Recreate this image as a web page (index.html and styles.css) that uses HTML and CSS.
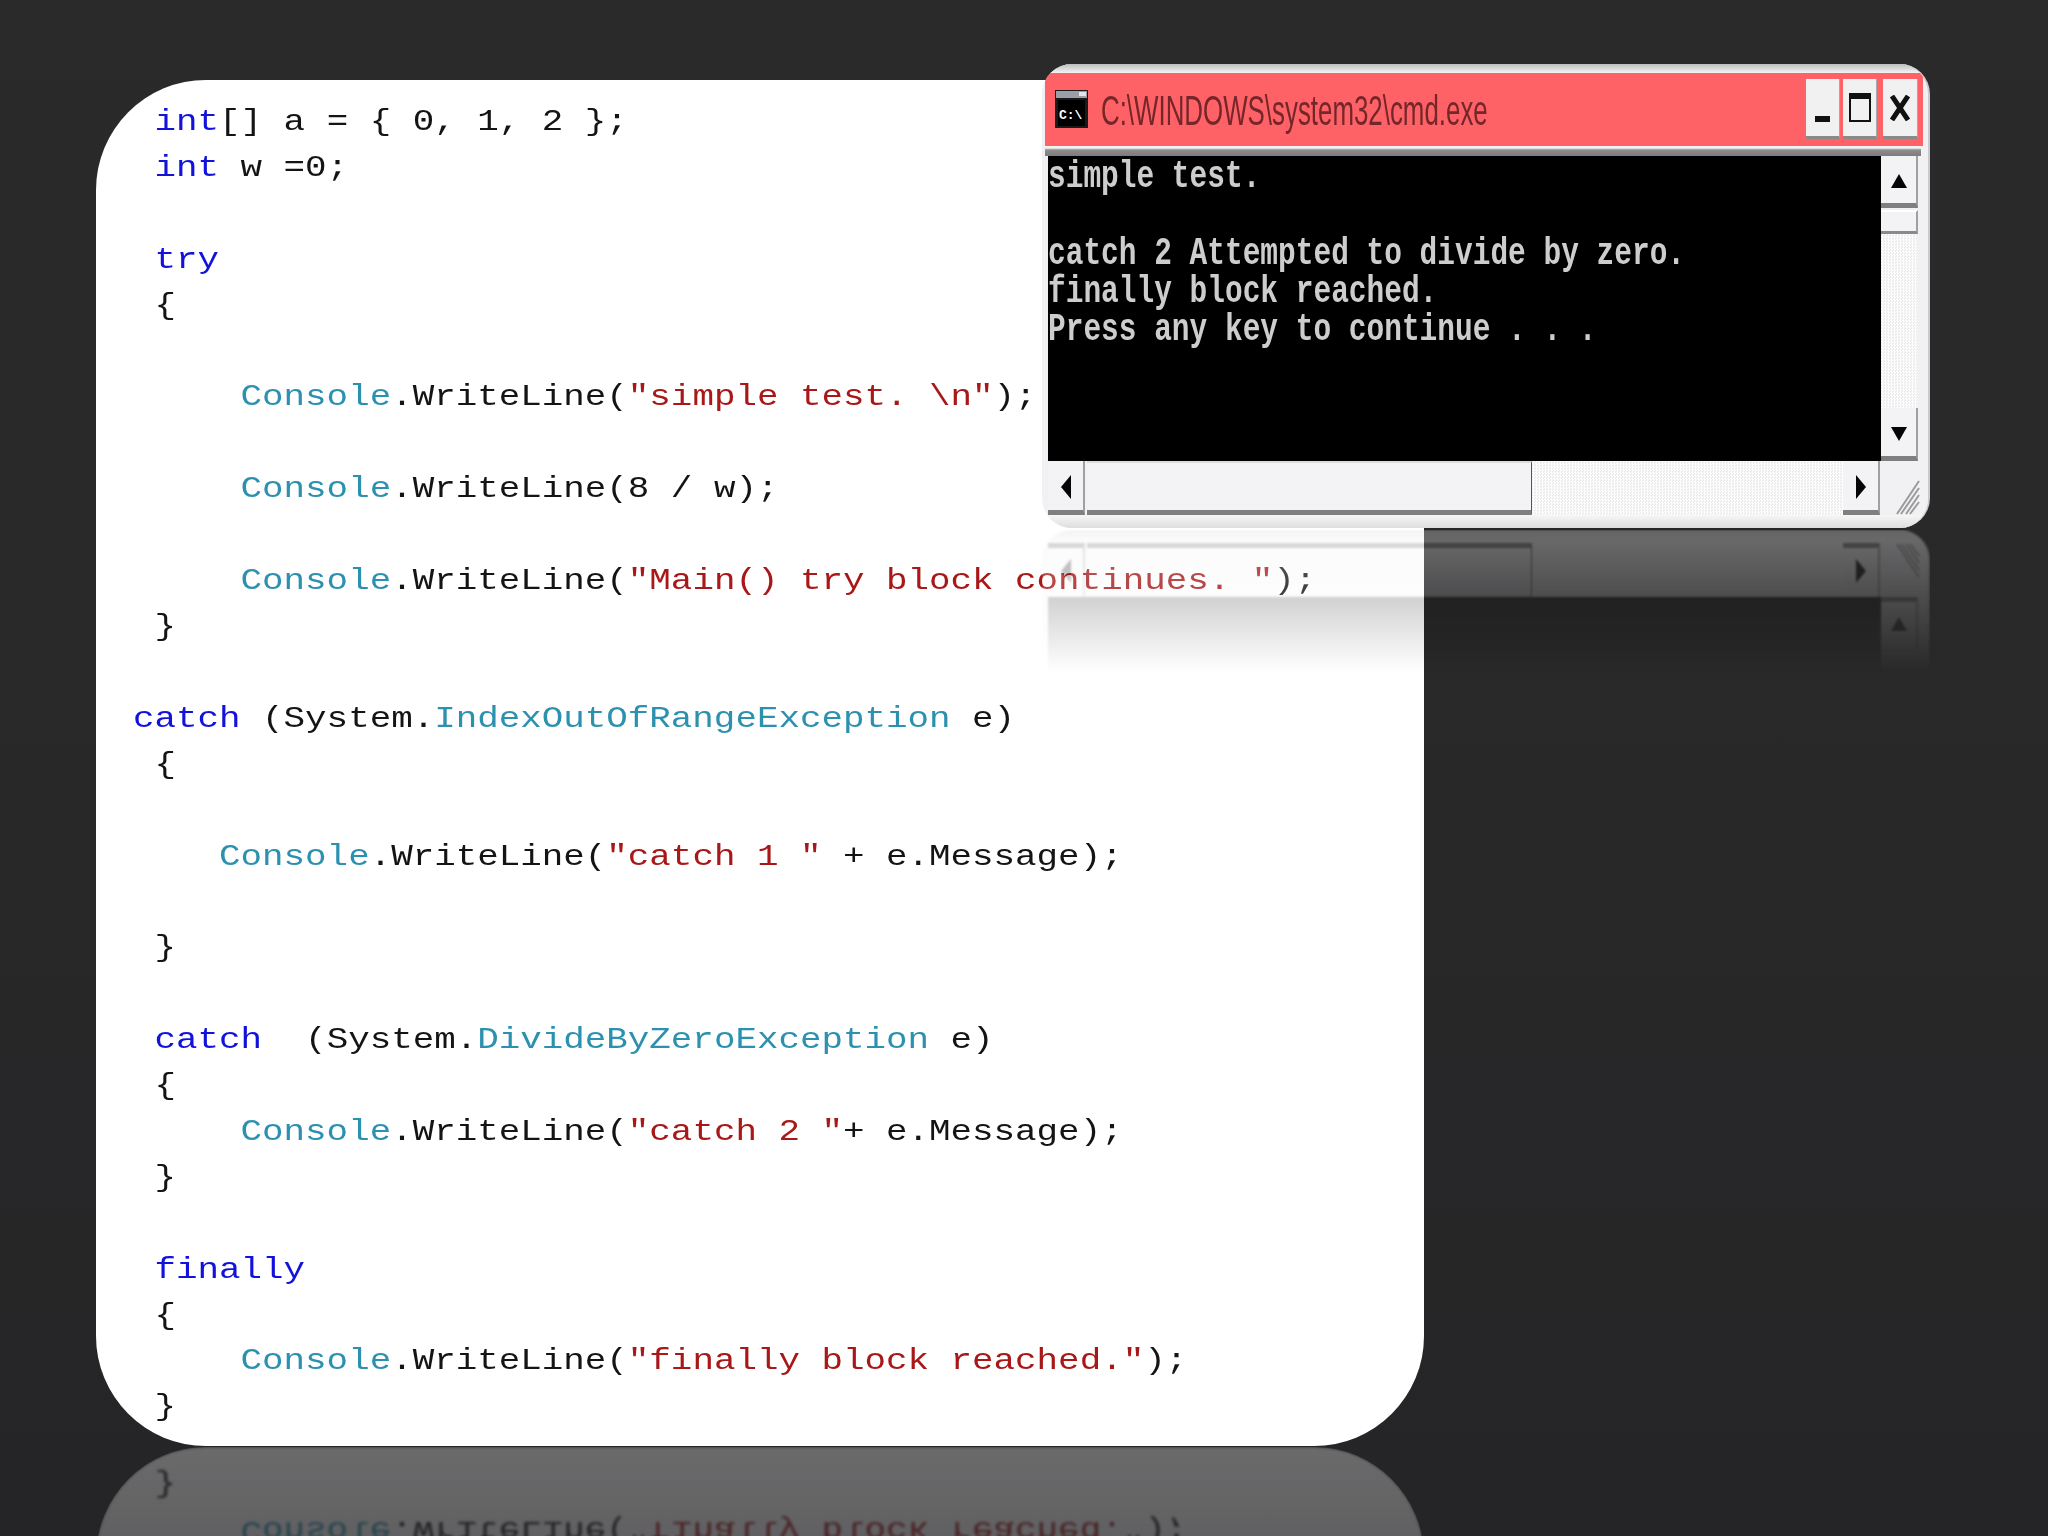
FILE: index.html
```html
<!DOCTYPE html>
<html lang="en">
<head>
<meta charset="utf-8">
<title>try catch finally</title>
<link rel="stylesheet" href="styles.css">
</head>
<body>
<main class="slide">
  <section class="panel">
    <div class="code">
      <div class="ln"><span class="k"> int</span><span>[] a = { 0, 1, 2 };</span></div>
      <div class="ln"><span class="k"> int</span><span> w =0;</span></div>
      <div class="ln"></div>
      <div class="ln"><span class="k"> try</span></div>
      <div class="ln"><span> {</span></div>
      <div class="ln"></div>
      <div class="ln"><span class="t">     Console</span><span>.WriteLine(</span><span class="s">"simple test. \n"</span><span>);</span></div>
      <div class="ln"></div>
      <div class="ln"><span class="t">     Console</span><span>.WriteLine(8 / w);</span></div>
      <div class="ln"></div>
      <div class="ln"><span class="t">     Console</span><span>.WriteLine(</span><span class="s">"Main() try block continues. "</span><span>);</span></div>
      <div class="ln"><span> }</span></div>
      <div class="ln"></div>
      <div class="ln"><span class="k">catch</span><span> (System.</span><span class="t">IndexOutOfRangeException</span><span> e)</span></div>
      <div class="ln"><span> {</span></div>
      <div class="ln"></div>
      <div class="ln"><span class="t">    Console</span><span>.WriteLine(</span><span class="s">"catch 1 "</span><span> + e.Message);</span></div>
      <div class="ln"></div>
      <div class="ln"><span> }</span></div>
      <div class="ln"></div>
      <div class="ln"><span class="k"> catch</span><span>  (System.</span><span class="t">DivideByZeroException</span><span> e)</span></div>
      <div class="ln"><span> {</span></div>
      <div class="ln"><span class="t">     Console</span><span>.WriteLine(</span><span class="s">"catch 2 "</span><span>+ e.Message);</span></div>
      <div class="ln"><span> }</span></div>
      <div class="ln"></div>
      <div class="ln"><span class="k"> finally</span></div>
      <div class="ln"><span> {</span></div>
      <div class="ln"><span class="t">     Console</span><span>.WriteLine(</span><span class="s">"finally block reached."</span><span>);</span></div>
      <div class="ln"><span> }</span></div>
    </div>
  </section>
  <section class="panel-mirror" aria-hidden="true">
    <div class="code code-mirror">
      <div class="ln"><span class="t">     Console</span><span>.WriteLine(</span><span class="s">"finally block reached."</span><span>);</span></div>
      <div class="ln"><span> }</span></div>
    </div>
  </section>

  <div class="win-mirror" aria-hidden="true">
    <div class="win">
      <div class="win-top"></div>
      <div class="titlebar"></div>
      <div class="sep"></div>
      <div class="client">
        <div class="console"></div>
        <div class="vbar">
          <div class="btn btn-up"><svg width="18" height="14" viewBox="0 0 18 14"><path d="M9 0 17 14H1Z"/></svg></div>
          <div class="vthumb"></div>
          <div class="vtrack"></div>
          <div class="btn btn-down"><svg width="18" height="14" viewBox="0 0 18 14"><path d="M1 0H17L9 14Z"/></svg></div>
        </div>
      </div>
      <div class="hrow">
        <div class="btn btn-side"><svg width="10" height="24" viewBox="0 0 10 24"><path d="M10 0V24L0 12Z"/></svg></div>
        <div class="hthumb"></div>
        <div class="htrack"></div>
        <div class="btn btn-side"><svg width="10" height="24" viewBox="0 0 10 24"><path d="M0 0 10 12 0 24Z"/></svg></div>
        <div class="grip"><svg width="26" height="36" viewBox="0 0 26 36"><path class="grip-lines" d="M25 2 3 35M25 9 7 35M25 16 12 35M25 23 16 35"/></svg></div>
      </div>
      <div class="win-bottom"></div>
    </div>
  </div>

  <div class="win win-front">
    <div class="win-top"></div>
    <div class="titlebar">
      <svg class="app-icon" width="33" height="38" viewBox="0 0 33 38">
        <rect width="33" height="38" fill="#1a1a1a"/>
        <rect x="1" y="1" width="31" height="7" fill="#9a9ea6"/>
        <rect x="24" y="2" width="7" height="4" fill="#e4e4e4"/>
        <rect x="3" y="10" width="27" height="26" fill="#000"/>
        <text x="4" y="29" class="icon-text">C:\</text>
      </svg>
      <span class="title-text">C:\WINDOWS\system32\cmd.exe</span>
      <div class="win-btns">
        <div class="cap cap-min"><i class="glyph-min"></i></div>
        <div class="cap cap-max"><i class="glyph-max"></i></div>
        <div class="cap cap-close"><svg width="20" height="26" viewBox="0 0 20 26"><path class="glyph-x" d="M2 1 18 25M18 1 2 25"/></svg></div>
      </div>
    </div>
    <div class="sep"></div>
    <div class="client">
      <div class="console">
        <div class="console-text">
          <div class="cl"><span>simple test.</span></div>
          <div class="cl"></div>
          <div class="cl"><span>catch 2 Attempted to divide by zero.</span></div>
          <div class="cl"><span>finally block reached.</span></div>
          <div class="cl"><span>Press any key to continue . . .</span></div>
        </div>
      </div>
      <div class="vbar">
        <div class="btn btn-up"><svg width="18" height="14" viewBox="0 0 18 14"><path d="M9 0 17 14H1Z"/></svg></div>
        <div class="vthumb"></div>
        <div class="vtrack"></div>
        <div class="btn btn-down"><svg width="18" height="14" viewBox="0 0 18 14"><path d="M1 0H17L9 14Z"/></svg></div>
      </div>
    </div>
    <div class="hrow">
      <div class="btn btn-side"><svg width="10" height="24" viewBox="0 0 10 24"><path d="M10 0V24L0 12Z"/></svg></div>
      <div class="hthumb"></div>
      <div class="htrack"></div>
      <div class="btn btn-side"><svg width="10" height="24" viewBox="0 0 10 24"><path d="M0 0 10 12 0 24Z"/></svg></div>
      <div class="grip"><svg width="26" height="36" viewBox="0 0 26 36"><path class="grip-lines" d="M25 2 3 35M25 9 7 35M25 16 12 35M25 23 16 35"/></svg></div>
    </div>
    <div class="win-bottom"></div>
  </div>
</main>
</body>
</html>
```
FILE: styles.css
```css
* { box-sizing: border-box; }
html, body { margin: 0; padding: 0; }
body { width: 2048px; height: 1536px; overflow: hidden; background: #282829; }

.slide {
  position: relative;
  width: 2048px;
  height: 1536px;
  overflow: hidden;
  padding: 80px 624px 0 96px;
  background: linear-gradient(180deg, #2a2a2a 0%, #282829 50%, #252527 100%);
}

/* code card */
.panel {
  width: 1328px;
  height: 1366px;
  padding: 19px 0 0 37px;
  background: #fff;
  border-radius: 110px;
  overflow: hidden;
}
.code {
  font: 30px/46px "Liberation Mono", monospace;
  color: #141414;
  transform: scaleX(1.195);
  transform-origin: left top;
}
.ln { height: 45.92px; white-space: pre; }
.k { color: #1212dc; }
.t { color: #2b91af; }
.s { color: #a81818; }

.panel-mirror {
  display: flex;
  flex-direction: column;
  justify-content: flex-end;
  width: 1328px;
  height: 300px;
  margin-top: 1px;
  padding: 0 0 14px 37px;
  background: #fff;
  border-radius: 0 0 110px 110px;
  overflow: hidden;
  transform: scaleY(-1);
  filter: blur(1.4px);
  -webkit-mask-image: linear-gradient(to top, rgba(0,0,0,.32), rgba(0,0,0,.16) 300px);
  mask-image: linear-gradient(to top, rgba(0,0,0,.32), rgba(0,0,0,.16) 300px);
}
.code-mirror { flex: none; }

/* console window */
.win {
  display: flex;
  flex-direction: column;
  width: 888px;
  height: 464px;
  background: #f1f1f3;
  border-radius: 30px;
  border-right: 2px solid #c9c9cb;
  overflow: hidden;
}
.win-front {
  position: absolute;
  left: 1042px;
  top: 64px;
}
.win-mirror {
  position: absolute;
  left: 1042px;
  top: 530px;
  width: 888px;
  height: 464px;
  transform: scaleY(-1);
  filter: blur(1px);
  -webkit-mask-image: linear-gradient(to top, rgba(0,0,0,.34), transparent 142px);
  mask-image: linear-gradient(to top, rgba(0,0,0,.34), transparent 142px);
}
.win-top {
  flex: none;
  height: 9px;
  background: linear-gradient(180deg, #bdbdbd, #f4f4f4);
}
.titlebar {
  flex: none;
  display: flex;
  align-items: flex-start;
  height: 73px;
  margin: 0 5px 0 3px;
  padding: 6px 5px 0 10px;
  background: #ff6266;
}
.app-icon { flex: none; margin-top: 11px; }
.icon-text {
  font: bold 13px "Liberation Mono", monospace;
  fill: #fff;
}
.title-text {
  flex: none;
  width: 628px;
  margin: 8px -241px 0 13px;
  font: 42px/48px "Liberation Sans", sans-serif;
  color: #74262a;
  white-space: nowrap;
  transform: scaleX(.616);
  transform-origin: left top;
}
.win-btns {
  display: flex;
  gap: 3px;
  margin-left: auto;
}
.cap {
  position: relative;
  display: flex;
  align-items: center;
  justify-content: center;
  width: 34px;
  height: 60px;
  background: #f1f1f1;
  border-bottom: 3px solid #8a8a8a;
  border-right: 1px solid #a8a8a8;
}
.cap-close { margin-left: 3px; width: 35px; }
.glyph-min {
  position: absolute;
  left: 9px;
  top: 37px;
  width: 15px;
  height: 6px;
  background: #111;
}
.glyph-max {
  position: absolute;
  left: 6px;
  top: 14px;
  width: 22px;
  height: 29px;
  border: 2px solid #111;
  border-top-width: 6px;
}
.glyph-x { fill: none; stroke: #111; stroke-width: 5; }

.sep {
  flex: none;
  height: 10px;
  margin: 0 7px 0 3px;
  background: linear-gradient(180deg, #f4f4f4 0 2px, #8d8d8d 4px, #7c7c7c 100%);
}
.client {
  flex: none;
  display: flex;
  height: 305px;
  padding-left: 6px;
}
.console {
  flex: none;
  width: 833px;
  padding-top: 2px;
  background: #000;
  overflow: hidden;
}
.console-text {
  width: 1100px;
  font: bold 38px/38.3px "Liberation Mono", monospace;
  color: #cdcdcd;
  transform: scaleX(.776);
  transform-origin: left top;
}
.cl { height: 38.3px; white-space: pre; }
.vbar {
  flex: none;
  display: flex;
  flex-direction: column;
  width: 37px;
}
.btn {
  flex: none;
  display: flex;
  align-items: center;
  justify-content: center;
  background: #f3f3f5;
  border-bottom: 5px solid #7f7f7f;
  border-right: 2px solid #a0a0a0;
}
.btn-up { height: 52px; padding-top: 2px; }
.btn-down { height: 53px; padding-top: 4px; }
.btn path { fill: #050505; }
.vthumb {
  flex: none;
  height: 24px;
  margin-top: 2px;
  background: #f3f3f5;
  border-bottom: 3px solid #8a8a8a;
  border-right: 2px solid #a0a0a0;
  border-top: 2px solid #fff;
}
.vtrack, .htrack {
  flex: 1;
  background: repeating-conic-gradient(#fdfdfd 0 25%, #ececec 0 50%) 0 0 / 3px 3px;
}
.hrow {
  flex: none;
  display: flex;
  height: 54px;
  padding-left: 6px;
}
.btn-side { width: 37px; padding-top: 2px; }
.hthumb {
  flex: none;
  width: 445px;
  margin-left: 2px;
  background: #f3f3f5;
  border-top: 2px solid #dcdcdc;
  border-bottom: 5px solid #7f7f7f;
  border-right: 1px solid #555;
}
.grip {
  flex: none;
  display: flex;
  align-items: flex-end;
  justify-content: flex-end;
  width: 48px;
  padding-right: 8px;
  background: #f1f1f3;
}
.grip-lines { fill: none; stroke: #9c9c9c; stroke-width: 2; }
.win-bottom {
  flex: none;
  height: 13px;
  background: linear-gradient(180deg, #f6f6f6, #dedede);
}
```
